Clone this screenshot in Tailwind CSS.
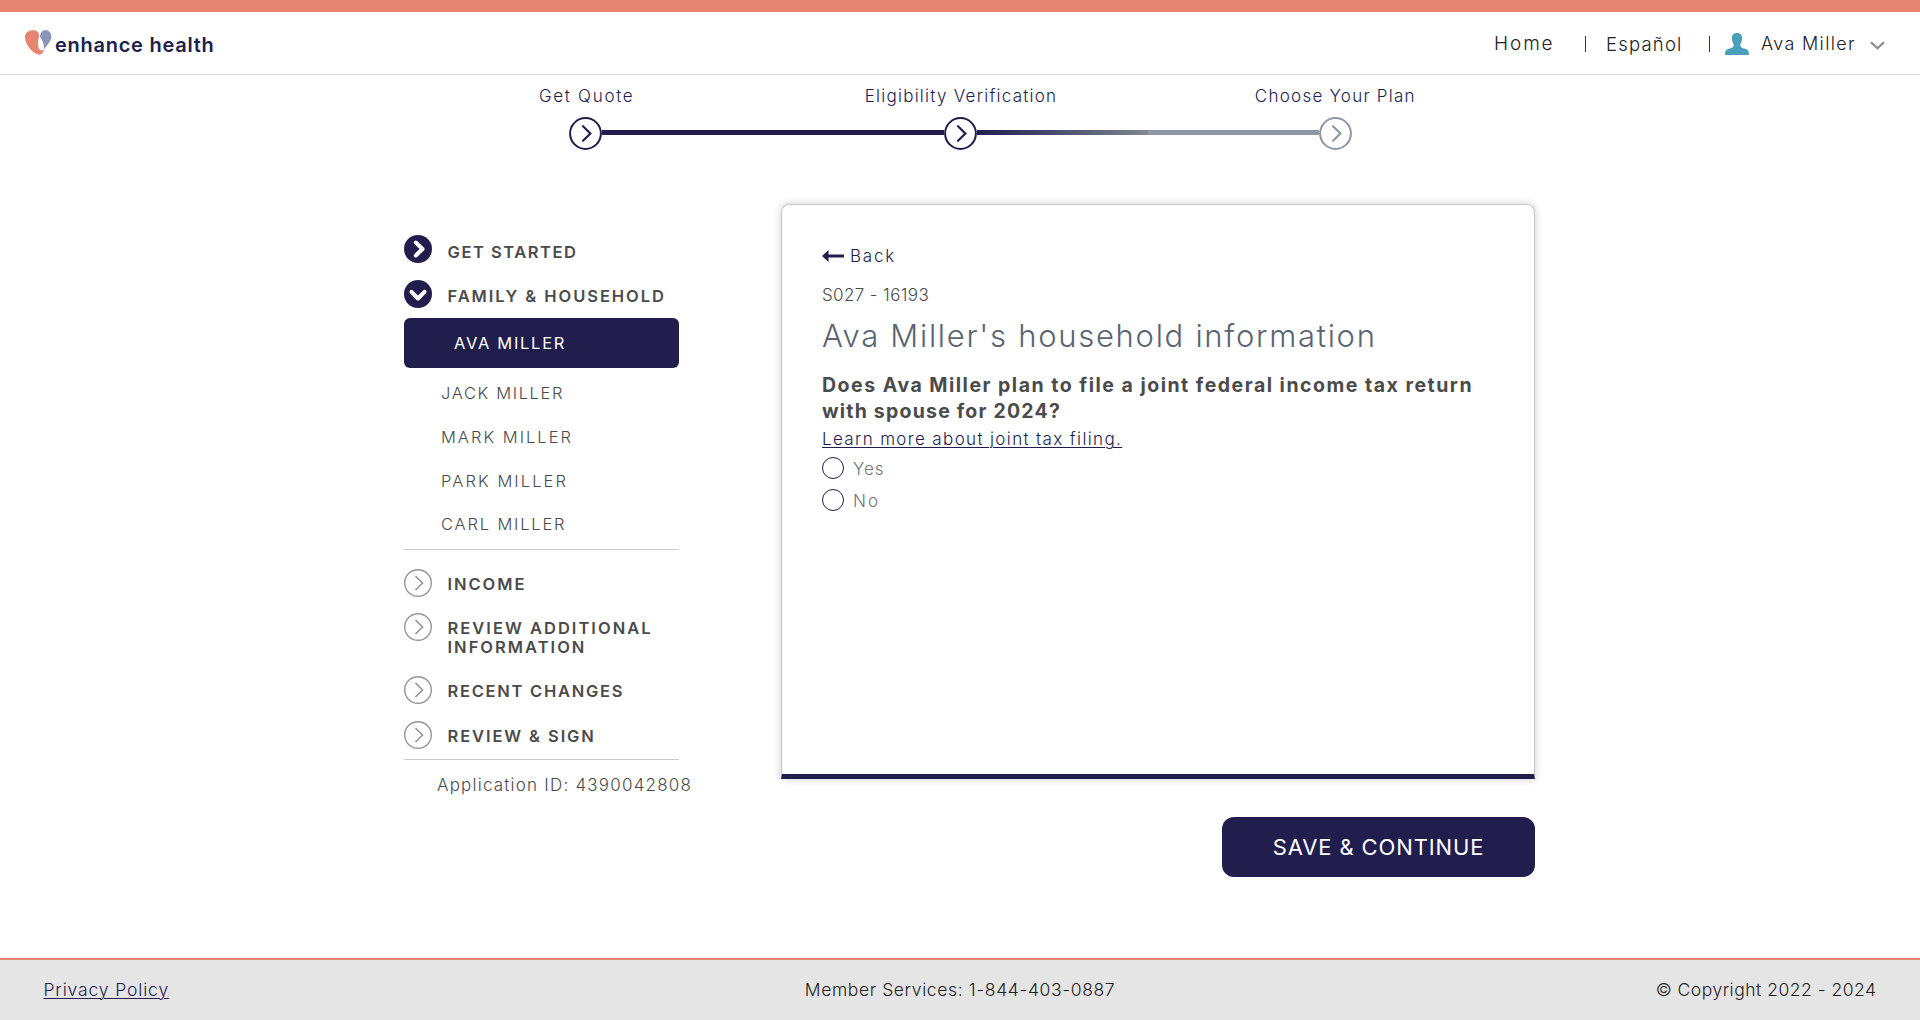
<!DOCTYPE html>
<html lang="en">
<head>
<meta charset="utf-8">
<title>Enhance Health</title>
<script src="https://cdn.jsdelivr.net/npm/@tailwindcss/browser@4"></script>
</head>
<body class="flex h-[1020px] w-[1920px] flex-col overflow-hidden bg-white font-['Inter',sans-serif] font-light text-[#4b4b4b]">
<svg class="hidden">
  <symbol id="ring" viewBox="0 0 28 28"><circle cx="14" cy="14" r="13.3" fill="none" stroke="#969696" stroke-width="1.4"/><path d="M11.500 7 18.500 14l-7 7" fill="none" stroke="#969696" stroke-width="1.7"/></symbol>
  <symbol id="step" viewBox="0 0 33 33"><circle cx="16.5" cy="16.5" r="15.4" fill="#fff" stroke="currentColor" stroke-width="2"/><path d="M14 9.200l7.400 7.300-7.400 7.300" fill="none" stroke="currentColor" stroke-width="2.200" stroke-linecap="round"/></symbol>
</svg>

<div class="h-3 shrink-0 bg-[#e68572]"></div>
<header class="flex h-[63px] shrink-0 items-center border-b border-[#d8d8d8] pl-[25px] text-[18px] text-[#222]">
  <svg class="-mt-0.5 h-[25px] w-[27px]" viewBox="0 0 27 25">
    <path d="M7.500.3C11.500-.3 14 2 14.200 6 13 10 12.500 15 13.800 18.500 15 20.500 17 20.700 19 19.500 18.500 22.500 17 24.700 14.500 24.700 8 24 0 15 0 7 0 3 3 .5 7.500.3Z" fill="#e68572"/>
    <path d="M20.500 0C24 .2 26.500 3 26.300 7 26 12 22 14.500 19.200 19.500 19 14 17.500 9.500 15 7 15.300 3 17.500 0 20.500 0Z" fill="#8b93b8"/>
  </svg>
  <div class="mt-[3px] ml-[3px] text-[20px] leading-6 font-semibold tracking-[0.74px] text-[#211e4d]">enhance health</div>
  <nav class="mt-0.5 ml-auto flex items-center leading-6">
    <a class="w-[91px] text-[19px] tracking-[1.9px]">Home</a>
    <span class="mr-[20px] h-4 w-px bg-[#43294a]"></span>
    <a class="w-[103px] text-[18.5px] tracking-[1.2px]">Español</a>
    <span class="mr-[15px] h-4 w-px bg-[#43294a]"></span>
    <svg class="h-[22px] w-6" viewBox="0 0 24 22"><path d="M12 0C16 0 17.300 2.500 17 6 17 9 15.500 10.500 15.300 12 15.300 14.500 18 15.200 20 15.800 23 16.700 24 18 24 22H0C0 18 1 16.700 4 15.800 6 15.200 8.700 14.500 8.700 12 8.500 10.500 7 9 7 6 6.700 2.500 8 0 12 0Z" fill="#4a9fba"/></svg>
    <a class="ml-3 w-[109px] tracking-[1.34px]">Ava Miller</a>
    <svg class="mt-0.5 mr-[35px] h-[9px] w-[15px]" viewBox="0 0 15 9"><path d="M1 1.200 7.500 7.300 14 1.200" fill="none" stroke="#8a8a8a" stroke-width="2.200"/></svg>
  </nav>
</header>

<section class="mx-auto h-[76px] w-[1125px] shrink-0 pt-[9px]">
  <div class="grid grid-cols-3 pl-0.5 text-center text-[17px] leading-6 text-[#211e4d]">
    <span class="tracking-[1.7px]">Get Quote</span>
    <span class="tracking-[1.25px]">Eligibility Verification</span>
    <span class="tracking-[1.25px]">Choose Your Plan</span>
  </div>
  <div class="mt-[9px] ml-[171.5px] flex items-center text-[#211e4d]">
    <svg class="size-[33px] shrink-0"><use href="#step"/></svg>
    <div class="-mt-0.5 h-[5px] w-[342px] bg-[#211e4d]"></div>
    <svg class="size-[33px] shrink-0"><use href="#step"/></svg>
    <div class="-mt-0.5 h-[5px] w-[171px] bg-linear-to-r from-[#211e4d] to-[#808890]"></div>
    <div class="-mt-0.5 h-[5px] w-[171px] bg-[#8e97a4]"></div>
    <svg class="size-[33px] shrink-0 text-[#8e97a4]"><use href="#step"/></svg>
  </div>
</section>

<main class="ml-[404px] flex h-[807px] w-[1131px] justify-between">
  <aside class="w-[275px] pt-[84px] text-[16.5px]">
    <div class="flex h-[45px] items-start font-semibold">
      <svg class="size-7" viewBox="0 0 28 28"><circle cx="14" cy="14" r="14" fill="#211e4d"/><path d="M11.800 7.500 18.500 14l-6.700 6.500" fill="none" stroke="#fff" stroke-width="4" stroke-linecap="round" stroke-linejoin="round"/></svg>
      <span class="mt-[7px] ml-[15.5px] leading-5 tracking-[1.53px]">GET STARTED</span>
    </div>
    <div class="flex h-[38px] items-start font-semibold whitespace-nowrap">
      <svg class="size-7 shrink-0" viewBox="0 0 28 28"><circle cx="14" cy="14" r="14" fill="#211e4d"/><path d="M7.500 11.800 14 18.500l6.500-6.700" fill="none" stroke="#fff" stroke-width="4" stroke-linecap="round" stroke-linejoin="round"/></svg>
      <span class="mt-[6px] ml-[15.5px] leading-5 tracking-[1.95px]">FAMILY &amp; HOUSEHOLD</span>
    </div>
    <div class="flex h-[50px] items-center rounded-md bg-[#211e4d] pl-[50px] font-normal tracking-[1.7px] text-white">AVA MILLER</div>
    <ul class="h-[182px] border-b border-[#ccc] pt-[3px] pl-[37px] leading-[44px]">
      <li class="tracking-[1.64px]">JACK MILLER</li>
      <li class="tracking-[2.01px]">MARK MILLER</li>
      <li class="tracking-[2.08px]">PARK MILLER</li>
      <li class="-mt-px tracking-[1.82px]">CARL MILLER</li>
    </ul>
    <div class="mt-[19px] flex h-11 font-semibold">
      <svg class="size-7 shrink-0"><use href="#ring"/></svg>
      <span class="mt-[5px] ml-[15.5px] leading-5 tracking-[1.95px]">INCOME</span>
    </div>
    <div class="flex h-[63px] font-semibold whitespace-nowrap">
      <svg class="size-7 shrink-0"><use href="#ring"/></svg>
      <span class="mt-[6px] ml-[15.5px] leading-[19px] tracking-[2.02px]">REVIEW ADDITIONAL<br>INFORMATION</span>
    </div>
    <div class="flex h-[45px] font-semibold">
      <svg class="size-7 shrink-0"><use href="#ring"/></svg>
      <span class="mt-[5px] ml-[15.5px] leading-5 tracking-[1.72px]">RECENT CHANGES</span>
    </div>
    <div class="flex h-[39px] border-b border-[#ccc] font-semibold">
      <svg class="size-7 shrink-0"><use href="#ring"/></svg>
      <span class="mt-[5px] ml-[15.5px] leading-5 tracking-[1.9px]">REVIEW &amp; SIGN</span>
    </div>
    <div class="mt-[15px] ml-[33px] text-[17px] leading-5 tracking-[1.21px] whitespace-nowrap">Application ID: 4390042808</div>
  </aside>

  <div class="flex w-[754px] flex-col items-end pt-[53px]">
    <section class="h-[575px] w-full rounded-t-lg border border-b-[5px] border-[#c8c8c8] border-b-[#211e4d] pt-[41px] pl-10 text-[17px] leading-5 shadow-[0_0_8px_rgba(0,0,0,0.2)]">
      <a class="flex items-center text-[#211e4d]">
        <svg class="h-3 w-[22px]" viewBox="0 0 22 12"><path d="M0 6 6.500 0v4.500H22v3H6.500V12Z" fill="#211e4d"/></svg>
        <span class="ml-[6px] tracking-[1.8px]">Back</span>
      </a>
      <div class="mt-[19px] tracking-[0.38px]">S027 - 16193</div>
      <h1 class="mt-[11px] text-[31px] leading-10 tracking-[1.71px] text-[#5a6472]">Ava Miller's household information</h1>
      <h2 class="mt-4 text-[19.5px] leading-[26px] font-bold whitespace-nowrap"><span class="tracking-[1.5px]">Does Ava Miller plan to file a joint federal income tax return</span><br><span class="tracking-[1.21px]">with spouse for 2024?</span></h2>
      <a class="mt-[5px] block tracking-[1.36px] text-[#211e4d] underline decoration-1 underline-offset-2">Learn more about joint tax filing.</a>
      <label class="mt-2 flex h-[22px] items-center text-[#757575]"><span class="mr-[9px] size-[22px] rounded-full border border-[#211e4d]"></span><span class="mt-0.5 tracking-[0.9px]">Yes</span></label>
      <label class="mt-[10px] flex h-[22px] items-center text-[#757575]"><span class="mr-[9px] size-[22px] rounded-full border border-[#211e4d]"></span><span class="mt-0.5 tracking-[2.09px]">No</span></label>
    </section>
    <button class="mt-[38px] h-[60px] w-[313px] rounded-xl bg-[#211e4d] text-[22px] font-normal tracking-[0.88px] text-white">SAVE &amp; CONTINUE</button>
  </div>
</main>

<footer class="grid h-[62px] shrink-0 grid-cols-3 items-center border-t-2 border-[#e68572] bg-[#e5e5e5] px-[43.5px] text-[17.5px] text-[#222]">
  <a class="tracking-[0.86px] text-[#211e4d]"><span class="underline decoration-1 underline-offset-2">Privacy Policy</span></a>
  <span class="text-center tracking-[0.62px]">Member Services: 1-844-403-0887</span>
  <span class="text-right tracking-[0.5px]">© Copyright 2022 - 2024</span>
</footer>
</body>
</html>
